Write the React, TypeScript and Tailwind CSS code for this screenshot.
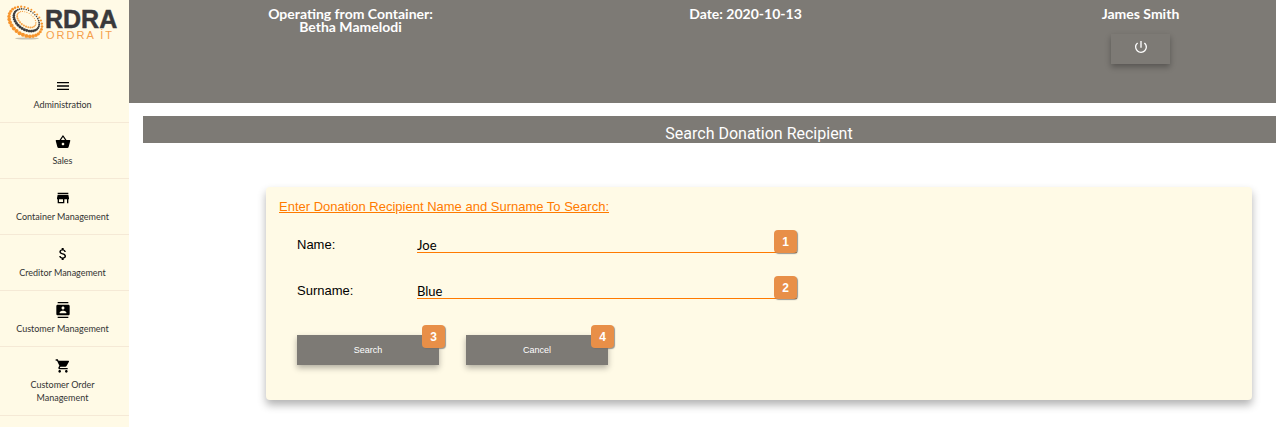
import type { ReactNode } from "react";
import type { IconType } from "react-icons";
import {
  MdMenu,
  MdShoppingBasket,
  MdStore,
  MdAttachMoney,
  MdContacts,
  MdShoppingCart,
  MdPowerSettingsNew,
} from "react-icons/md";

const navItems: { label: string; icon: IconType }[] = [
  { label: "Administration", icon: MdMenu },
  { label: "Sales", icon: MdShoppingBasket },
  { label: "Container Management", icon: MdStore },
  { label: "Creditor Management", icon: MdAttachMoney },
  { label: "Customer Management", icon: MdContacts },
  { label: "Customer Order Management", icon: MdShoppingCart },
];

function ring(cx: number, cy: number, rx: number, ry: number, count: number, r: number, fill: string) {
  const tilt = (35 * Math.PI) / 180;
  return Array.from({ length: count }, (_, i) => {
    const a = (i / count) * 2 * Math.PI;
    const x = rx * Math.cos(a);
    const y = ry * Math.sin(a);
    // Dots grow toward the lower left of the ring.
    const size = r * (1 + 0.35 * Math.sin(a));
    return (
      <circle
        key={`${fill}-${rx}-${i}`}
        cx={cx + x * Math.cos(tilt) - y * Math.sin(tilt)}
        cy={cy + x * Math.sin(tilt) + y * Math.cos(tilt)}
        r={size}
        fill={fill}
      />
    );
  });
}

function Logo() {
  return (
    <svg viewBox="0 0 129 44" className="block h-11 w-[129px]" role="img" aria-label="ORDRA IT">
      <ellipse cx="27" cy="38.5" rx="12" ry="0.9" fill="#c9c3b3" />
      {ring(25.5, 21.5, 18, 13, 30, 1.5, "#f7952d")}
      {ring(26.5, 20, 14, 9.5, 34, 1.1, "#3b3b3d")}
      {ring(26.5, 19.5, 10.5, 6.5, 26, 0.8, "#f7a54a")}
      <text x="45" y="28" fontSize="25" fontWeight="700" fill="#39393b" stroke="#39393b" strokeWidth="0.5" fontFamily="Liberation Sans, sans-serif">
        RDRA
      </text>
      <text x="46" y="39" fontSize="11" fill="#f5a04c" className="tracking-[2px]" fontFamily="Liberation Sans, sans-serif">
        ORDRA İT
      </text>
    </svg>
  );
}

function Badge({ children }: { children: ReactNode }) {
  return (
    <span className="flex size-[23px] items-center justify-center rounded-[4px] bg-[#e88f48] font-['Liberation_Sans',sans-serif] text-xs font-bold text-white shadow-[1px_1px_1px_rgba(110,110,110,0.7)]">
      {children}
    </span>
  );
}

function Field({ id, label, value, badge }: { id: string; label: string; value: string; badge: string }) {
  return (
    <div className="flex items-end">
      <label htmlFor={id} className="w-[120px] text-[13px] leading-4">
        {label}
      </label>
      <div className="relative w-[380px]">
        <input
          id={id}
          defaultValue={value}
          className="block h-5 w-full border-b border-[#ff7a00] bg-transparent p-0 pt-1 font-[Lato,sans-serif] text-[13px] leading-4 outline-none"
        />
        <div className="absolute right-0 bottom-0">
          <Badge>{badge}</Badge>
        </div>
      </div>
    </div>
  );
}

function ActionButton({ label, badge }: { label: string; badge: string }) {
  return (
    <div className="relative">
      <button
        type="button"
        className="block h-[30px] w-[142px] bg-[#7d7a75] pt-px text-[9px] text-white shadow-[0_3px_6px_rgba(0,0,0,0.3)]"
      >
        {label}
      </button>
      <div className="absolute -top-[10px] -right-[6px]">
        <Badge>{badge}</Badge>
      </div>
    </div>
  );
}

export default function App() {
  return (
    <div className="flex min-h-screen overflow-x-hidden bg-white font-['Liberation_Sans',sans-serif] text-black">
      <aside className="w-[129px] shrink-0 bg-[#fffae6]">
        <Logo />
        <nav className="pt-[23px] font-[Lato,sans-serif]">
          {navItems.map(({ label, icon: Icon }) => (
            <a
              key={label}
              href="#"
              className="flex flex-col items-center gap-1 border-b border-[#f5e9d6] pt-[11px] pr-1 pb-[11px] text-center text-[9px] leading-[13px] text-[#333]"
            >
              <Icon className="size-4 text-black" />
              <span className="max-w-[96px]">{label}</span>
            </a>
          ))}
        </nav>
      </aside>

      <div className="min-w-0 flex-1 overflow-x-hidden">
        <header className="h-[103px] overflow-hidden bg-[#7d7a75] text-white">
          <div className="-mr-[62px] grid grid-cols-3 pt-[7px] pl-6 text-center font-[Lato,sans-serif] text-sm leading-[13px] font-bold">
            <p>
              Operating from Container:
              <br />
              Betha Mamelodi
            </p>
            <p>Date: 2020-10-13</p>
            <div className="flex flex-col items-center gap-[14px]">
              <p>James Smith</p>
              <button
                type="button"
                aria-label="Log out"
                className="flex h-[30px] w-[59px] items-center justify-center bg-[#7d7a75] pb-1 shadow-[0_3px_6px_rgba(0,0,0,0.3)]"
              >
                <MdPowerSettingsNew className="size-4" />
              </button>
            </div>
          </div>
        </header>

        <main>
          <h1 className="mt-[13px] ml-[14px] h-[27px] bg-[#7d7a75] pt-[6px] pl-[99px] text-center font-[Roboto,sans-serif] text-base leading-6 text-white">
            Search Donation Recipient
          </h1>

          <form className="mt-11 mr-6 mb-[27px] ml-[137px] rounded bg-[#fffae6] px-[13px] pt-3 pb-[35px] shadow-[0_5px_8px_rgba(0,0,0,0.3)]">
            <h2 className="text-[13px] leading-4 text-[#ff7a00] underline">
              Enter Donation Recipient Name and Surname To Search:
            </h2>
            <div className="mt-[18px] ml-[18px] flex flex-col gap-[26px]">
              <Field id="name" label="Name:" value="Joe" badge="1" />
              <Field id="surname" label="Surname:" value="Blue" badge="2" />
            </div>
            <div className="mt-9 ml-[18px] flex gap-[27px]">
              <ActionButton label="Search" badge="3" />
              <ActionButton label="Cancel" badge="4" />
            </div>
          </form>
        </main>
      </div>
    </div>
  );
}
